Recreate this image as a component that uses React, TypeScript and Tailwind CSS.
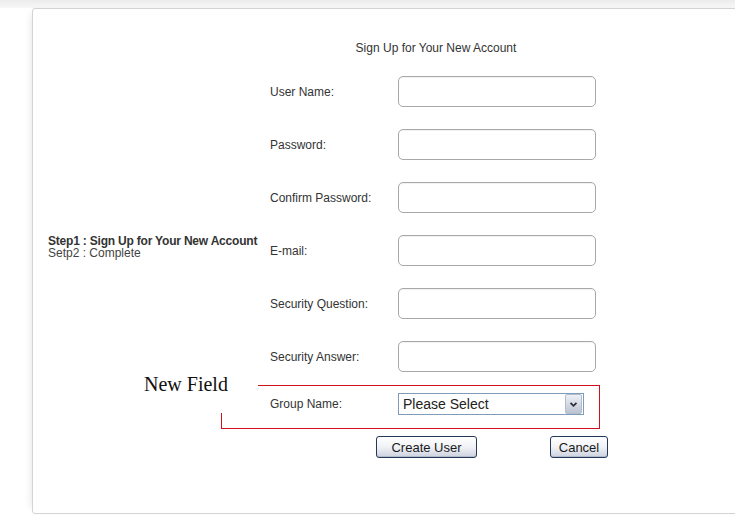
import React from 'react';

const FIELDS = [
  'User Name:',
  'Password:',
  'Confirm Password:',
  'E-mail:',
  'Security Question:',
  'Security Answer:',
];

function TextBox() {
  return (
    <div className="w-[198px] h-[31px] rounded-[5px] border border-[#a8a8a8] bg-white shadow-[inset_0_1px_1px_rgba(0,0,0,0.06)]" />
  );
}

function SelectBox() {
  return (
    <div className="w-[186px] h-[22px] border border-[#7f9db9] bg-white flex items-center">
      <span className="flex-1 pl-[4px] text-[14px] leading-[14px] text-[#222]">Please Select</span>
      <div className="w-[17px] h-[20px] mr-[1px] rounded-[2px] border border-[#b2bccc] bg-linear-to-b from-[#eef1f6] to-[#bcc3d1] flex items-center justify-center">
        <svg width="9" height="7" viewBox="0 0 9 7">
          <path d="M1.5 1.8 L4.5 4.8 L7.5 1.8" fill="none" stroke="#2b2f3a" strokeWidth="1.8" />
        </svg>
      </div>
    </div>
  );
}

function XpButton({ label, width }: { label: string; width: string }) {
  return (
    <button
      className={`${width} h-[22px] rounded-[3px] border border-[#23395a] bg-linear-to-b from-[#ffffff] via-[#f1f2f6] to-[#cdd2e0] text-[13px] leading-[13px] text-[#1a1a1a] shadow-[inset_0_-1px_0_rgba(120,130,160,0.3)]`}
    >
      {label}
    </button>
  );
}

export default function App() {
  return (
    <div className="w-[735px] h-[526px] overflow-hidden bg-white text-[#333] font-['Liberation_Sans',Arial,sans-serif]">
      <div className="h-[8px] bg-linear-to-b from-[#ececec] to-[#f7f7f7]" />

      <div className="relative ml-[32px] w-[730px] h-[506px] border border-[#d3d3d3] rounded-l-[3px] flex shadow-[-6px_0_8px_-6px_rgba(0,0,0,0.12)]">
        {/* step list */}
        <div className="w-[237px] pl-[15px] pt-[226px] text-[12px]">
          <div className="font-bold text-[#333] leading-[13px] tracking-[-0.2px]">Step1 : Sign Up for Your New Account</div>
          <div className="text-[#444] leading-[11px]">Setp2 : Complete</div>
        </div>

        {/* form */}
        <div className="flex flex-col pt-[32px] text-[12px]">
          <div className="w-[332px] h-[14px] leading-[14px] text-center">Sign Up for Your New Account</div>

          <div className="mt-[21px] flex flex-col gap-[22px]">
            {FIELDS.map((f) => (
              <div key={f} className="flex items-center h-[31px]">
                <span className="w-[128px]">{f}</span>
                <TextBox />
              </div>
            ))}
          </div>

          <div className="mt-[21px] flex items-center h-[22px]">
            <span className="w-[128px]">Group Name:</span>
            <SelectBox />
          </div>

          <div className="mt-[21px] flex h-[22px]">
            <div className="ml-[106px]">
              <XpButton label="Create User" width="w-[101px]" />
            </div>
            <div className="ml-[73px]">
              <XpButton label="Cancel" width="w-[58px]" />
            </div>
          </div>
        </div>

        {/* annotation */}
        <div className="absolute left-[111px] top-[365px] font-['Liberation_Serif','Times_New_Roman',serif] text-[20px] leading-[20px] text-[#111]">
          New Field
        </div>
        <div className="absolute left-[225px] top-[376px] w-[342px] h-px bg-[#d0101a]" />
        <div className="absolute left-[566px] top-[376px] w-px h-[44px] bg-[#d0101a]" />
        <div className="absolute left-[188px] top-[419px] w-[379px] h-px bg-[#d0101a]" />
        <div className="absolute left-[188px] top-[404px] w-px h-[16px] bg-[#d0101a]" />
      </div>
    </div>
  );
}
